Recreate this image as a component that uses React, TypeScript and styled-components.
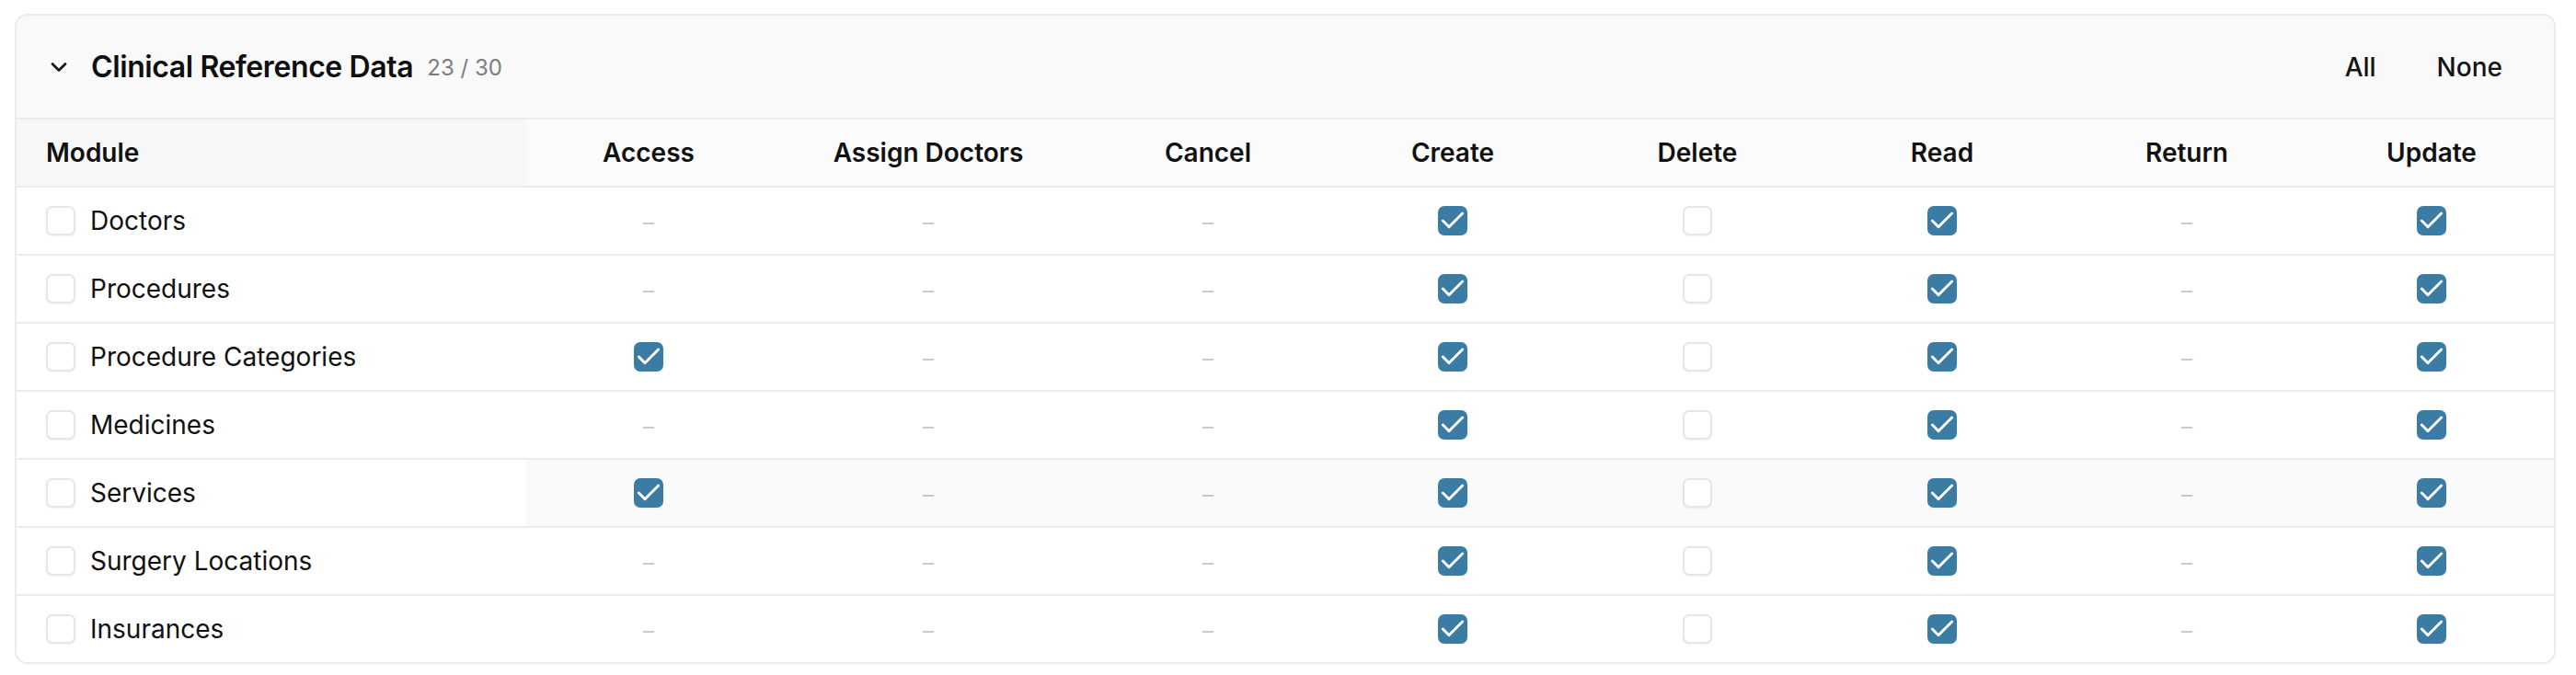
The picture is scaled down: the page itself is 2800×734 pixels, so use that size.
import React from 'react';
import styled, { createGlobalStyle } from 'styled-components';
import { Check, ChevronDown } from 'lucide-react';

type Cell = 'none' | 'on' | 'off';

type ModuleRow = {
	name: string;
	cells: Cell[];
};

const columns = ['Access', 'Assign Doctors', 'Cancel', 'Create', 'Delete', 'Read', 'Return', 'Update'];

const base = (access: Cell): Cell[] => [access, 'none', 'none', 'on', 'off', 'on', 'none', 'on'];

const rows: ModuleRow[] = [
	{ name: 'Doctors', cells: base('none') },
	{ name: 'Procedures', cells: base('none') },
	{ name: 'Procedure Categories', cells: base('on') },
	{ name: 'Medicines', cells: base('none') },
	{ name: 'Services', cells: base('on') },
	{ name: 'Surgery Locations', cells: base('none') },
	{ name: 'Insurances', cells: base('none') },
];

const HOVERED = 'Services';

const GlobalStyle = createGlobalStyle`
	* {
		box-sizing: border-box;
	}
	body {
		margin: 15px 16px;
		background: #ffffff;
		font-family: Inter, 'Noto Sans', sans-serif;
		color: #111111;
	}
`;

const Box: React.FC<{ checked: boolean }> = ({ checked }) => (
	<CheckBox $checked={checked}>{checked && <Check size={32} strokeWidth={2.2} color="#ffffff" />}</CheckBox>
);

export default function App() {
	return (
		<>
			<GlobalStyle />
			<Card>
				<Header>
					<TitleGroup>
						<ChevronDown size={28} strokeWidth={2.4} color="#1a1a1a" />
						<Title>Clinical Reference Data</Title>
						<Count>23 / 30</Count>
					</TitleGroup>
					<Actions>
						<TextButton>All</TextButton>
						<TextButton>None</TextButton>
					</Actions>
				</Header>
				<HeadRow>
					<ModuleHead>Module</ModuleHead>
					{columns.map((c) => (
						<HeadCell key={c}>{c}</HeadCell>
					))}
				</HeadRow>
				{rows.map((r, i) => (
					<Row key={r.name} $last={i === rows.length - 1}>
						<ModuleCell>
							<Box checked={false} />
							<ModuleName>{r.name}</ModuleName>
						</ModuleCell>
						{r.cells.map((cell, j) => (
							<Cell key={j} $hovered={r.name === HOVERED}>
								{cell === 'none' ? <Dash>–</Dash> : <Box checked={cell === 'on'} />}
							</Cell>
						))}
					</Row>
				))}
			</Card>
		</>
	);
}

const gridColumns = '554px 266px 342px repeat(6, 266px)';

const Card = styled.div`
	width: 2762px;
	border: 2px solid #ebebeb;
	border-radius: 14px;
	overflow: hidden;
	background: #ffffff;
`;
const Header = styled.div`
	display: flex;
	align-items: center;
	justify-content: space-between;
	height: 113px;
	padding: 0 32px;
	background: #f9f9f9;
	border-bottom: 2px solid #ebebeb;
`;
const TitleGroup = styled.div`
	display: flex;
	align-items: center;
	svg {
		margin-right: 21px;
	}
`;
const Title = styled.h2`
	margin: 0;
	font-size: 32px;
	font-weight: 600;
	letter-spacing: -0.4px;
	color: #0f0f0f;
`;
const Count = styled.span`
	margin-left: 15px;
	font-size: 24px;
	font-weight: 400;
	color: #7d7d7d;
	padding-top: 2px;
`;
const Actions = styled.div`
	display: flex;
	gap: 18px;
`;
const TextButton = styled.button`
	border: none;
	background: transparent;
	padding: 10px 24px;
	font-family: Inter, 'Noto Sans', sans-serif;
	font-size: 28px;
	font-weight: 500;
	color: #141414;
	cursor: pointer;
`;
const HeadRow = styled.div`
	display: grid;
	grid-template-columns: ${gridColumns};
	height: 74px;
	border-bottom: 2px solid #ebebeb;
	background: #fbfbfb;
`;
const ModuleHead = styled.div`
	display: flex;
	align-items: center;
	padding-left: 32px;
	font-size: 28px;
	font-weight: 600;
	background: #f7f7f7;
`;
const HeadCell = styled.div`
	display: flex;
	align-items: center;
	justify-content: center;
	font-size: 28px;
	font-weight: 600;
	color: #111111;
`;
const Row = styled.div<{ $last: boolean }>`
	display: grid;
	grid-template-columns: ${gridColumns};
	height: ${(p) => (p.$last ? '72px' : '74px')};
	border-bottom: ${(p) => (p.$last ? 'none' : '2px solid #ebebeb')};
`;
const ModuleCell = styled.div`
	display: flex;
	align-items: center;
	gap: 16px;
	padding-left: 32px;
	background: #ffffff;
`;
const ModuleName = styled.span`
	font-size: 28px;
	font-weight: 400;
	color: #111111;
`;
const Cell = styled.div<{ $hovered: boolean }>`
	display: flex;
	align-items: center;
	justify-content: center;
	background: ${(p) => (p.$hovered ? '#fafafa' : '#ffffff')};
`;
const Dash = styled.span`
	font-size: 24px;
	color: #c9c9c9;
	line-height: 1;
	padding-top: 4px;
`;
const CheckBox = styled.span<{ $checked: boolean }>`
	display: flex;
	align-items: center;
	justify-content: center;
	width: 32px;
	height: 32px;
	flex-shrink: 0;
	border-radius: 7px;
	background: ${(p) => (p.$checked ? '#3b7ca5' : '#ffffff')};
	border: ${(p) => (p.$checked ? 'none' : '2px solid #e6e6e6')};
	box-shadow: 0 1px 2px rgba(0, 0, 0, 0.06);
	svg {
		flex-shrink: 0;
	}
`;
